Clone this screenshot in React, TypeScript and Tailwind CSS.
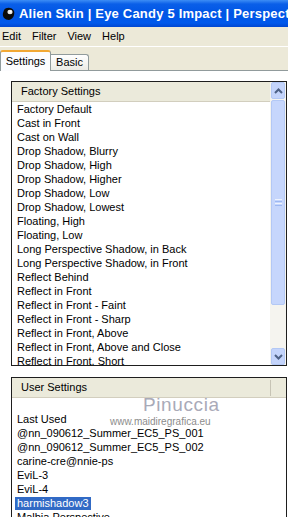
const factoryPresets = [
  'Factory Default',
  'Cast in Front',
  'Cast on Wall',
  'Drop Shadow, Blurry',
  'Drop Shadow, High',
  'Drop Shadow, Higher',
  'Drop Shadow, Low',
  'Drop Shadow, Lowest',
  'Floating, High',
  'Floating, Low',
  'Long Perspective Shadow, in Back',
  'Long Perspective Shadow, in Front',
  'Reflect Behind',
  'Reflect in Front',
  'Reflect in Front - Faint',
  'Reflect in Front - Sharp',
  'Reflect in Front, Above',
  'Reflect in Front, Above and Close',
  'Reflect in Front, Short',
];

const userPresets = [
  '',
  'Last Used',
  '@nn_090612_Summer_EC5_PS_001',
  '@nn_090612_Summer_EC5_PS_002',
  'carine-cre@nnie-ps',
  'EviL-3',
  'EviL-4',
  'harmishadow3',
  'Malbia Perspective',
];

const Arrow = ({ up }: { up?: boolean }) => (
  <svg width="9" height="6" viewBox="0 0 9 6">
    <path
      d={up ? 'M1 5 L4.5 1.5 L8 5' : 'M1 1 L4.5 4.5 L8 1'}
      fill="none"
      stroke="#4d6185"
      strokeWidth="2"
    />
  </svg>
);

const ScrollButton = ({ up }: { up?: boolean }) => (
  <div className="h-[17px] mx-px rounded-[2px] bg-[#c4d4fb] border border-[#b3c8f5] flex items-center justify-center">
    <Arrow up={up} />
  </div>
);

const Scrollbar = () => (
  <div className="w-[16px] bg-[#f5f4ef] flex flex-col">
    <ScrollButton up />
    <div className="h-[205px] mx-px mt-px rounded-[2px] bg-[#c6d6fc] border border-[#b3c8f5] flex flex-col items-center justify-center gap-[1px]">
      <div className="w-[7px] h-px bg-[#eef3fe]" />
      <div className="w-[7px] h-px bg-[#9db8f2]" />
      <div className="w-[7px] h-px bg-[#eef3fe]" />
      <div className="w-[7px] h-px bg-[#9db8f2]" />
    </div>
    <div className="flex-1" />
    <ScrollButton />
  </div>
);

const ListHeader = ({ title, divider }: { title: string; divider?: boolean }) => (
  <div className="h-[20px] shrink-0 bg-[#ebeadb] border-b border-[#d2cebe] flex items-center">
    <span className="flex-1 pl-[9px] text-[11px] text-black">{title}</span>
    {divider && <div className="w-px h-[16px] bg-[#c7c4b5] mr-[15px]" />}
  </div>
);

const Row = ({ label, selected }: { label: string; selected?: boolean }) => (
  <div className="h-[14px] shrink-0 pl-[3px] flex items-center">
    <span
      className={
        selected
          ? 'px-[2px] leading-[13px] bg-[#316ac5] text-white'
          : 'px-[2px] leading-[13px] text-black'
      }
    >
      {label}
    </span>
  </div>
);

export default function App() {
  return (
    <div
      className="w-[288px] h-[517px] overflow-hidden bg-white flex flex-col text-[11px]"
      style={{ fontFamily: '"Liberation Sans", Arial, sans-serif' }}
    >
      {/* title bar */}
      <div className="h-[27px] shrink-0 flex items-center gap-[4px] pl-[2px] bg-[linear-gradient(to_bottom,#3d8df5_0%,#0a5fe8_15%,#0055e5_50%,#0059ec_85%,#0046d0_100%)] overflow-hidden whitespace-nowrap">
        <svg width="13" height="14" viewBox="0 0 13 14" className="shrink-0">
          <path d="M2 3 C4 0 10 0 12 4 C13 8 11 12 7 13 C3 13 0 10 1 6 Z" fill="#0b0b0b" />
          <ellipse cx="8" cy="5" rx="2.6" ry="2.2" fill="#e8e8e8" />
          <circle cx="8.6" cy="4.4" r="0.9" fill="#ffffff" />
        </svg>
        <span className="text-white font-bold text-[13px] tracking-[0.2px]">
          Alien Skin | Eye Candy 5 Impact | Perspective Shadow
        </span>
      </div>

      {/* menu bar */}
      <div className="h-[19px] shrink-0 bg-[#ece9d8] flex items-center gap-[11px] pl-[2px] text-black">
        <span>Edit</span>
        <span>Filter</span>
        <span>View</span>
        <span>Help</span>
      </div>

      {/* tab strip */}
      <div className="h-[24px] shrink-0 bg-[#ece9d8] border-t border-white flex items-end">
        <div className="w-[51px] h-[21px] bg-[#fcfcfe] border-x border-[#919b9c] border-t-2 border-t-[#f2a834] rounded-t-[3px] flex items-center justify-center -mb-px relative z-10">
          <span className="text-black">Settings</span>
        </div>
        <div className="w-[38px] h-[16px] bg-[linear-gradient(to_bottom,#ffffff,#ecebe5)] border-t border-r border-[#919b9c] rounded-tr-[3px] flex items-center justify-center">
          <span className="text-black">Basic</span>
        </div>
        <div className="flex-1" />
      </div>

      {/* tab panel */}
      <div className="flex-1 border-t border-[#919b9c] bg-white pt-[10px] pl-[11px]">
        <div className="w-[276px] h-[285px] border border-[#1e1e1e] flex overflow-hidden">
          <div className="flex-1 min-w-0 flex flex-col overflow-hidden whitespace-nowrap">
            <ListHeader title="Factory Settings" />
            {factoryPresets.map((p) => (
              <Row key={p} label={p} />
            ))}
          </div>
          <Scrollbar />
        </div>

        <div className="relative mt-[11px] w-[276px] h-[200px] border border-[#1e1e1e] flex flex-col overflow-hidden whitespace-nowrap">
          <ListHeader title="User Settings" divider />
          {userPresets.map((p, i) => (
            <Row key={i} label={p} selected={p === 'harmishadow3'} />
          ))}
          {/* watermark */}
          <span className="absolute left-[131px] top-[17px] text-[19px] leading-[20px] text-[#a9aab8] tracking-[0.6px] pointer-events-none">
            Pinuccia
          </span>
          <span className="absolute left-[98px] top-[38px] text-[10px] leading-[11px] text-[#8c8c8c] pointer-events-none">
            www.maidiregrafica.eu
          </span>
        </div>
      </div>
    </div>
  );
}
